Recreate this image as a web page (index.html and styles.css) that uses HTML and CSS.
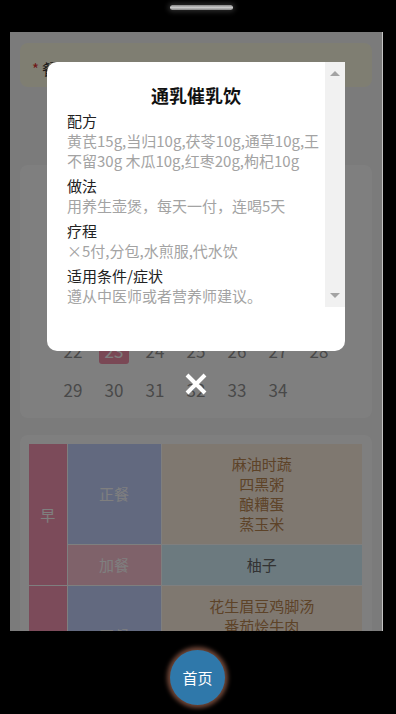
FILE: index.html
```html
<!DOCTYPE html>
<html lang="zh-CN">
<head>
<meta charset="utf-8">
<title>通乳催乳饮</title>
<link rel="stylesheet" href="styles.css">
</head>
<body>
<div class="device">
  <div class="top-bar"><span class="speaker"></span></div>
  <div class="screen">
    <div class="page">
      <div class="card notice"><span class="req">*</span>餐单根据产后天数推荐，仅供参考</div>
      <div class="card calendar">
        <div class="cal-grid">
          <span class="head">日</span><span class="head">一</span><span class="head">二</span><span class="head">三</span><span class="head">四</span><span class="head">五</span><span class="head">六</span>
          <span>1</span><span>2</span><span>3</span><span>4</span><span>5</span><span>6</span><span>7</span>
          <span>8</span><span>9</span><span>10</span><span>11</span><span>12</span><span>13</span><span>14</span>
          <span>15</span><span>16</span><span>17</span><span>18</span><span>19</span><span>20</span><span>21</span>
          <span>22</span><span class="today"><b>23</b></span><span>24</span><span>25</span><span>26</span><span>27</span><span>28</span>
          <span>29</span><span>30</span><span>31</span><span>32</span><span>33</span><span>34</span>
        </div>
      </div>
      <div class="card menu">
        <table class="meal">
          <colgroup><col class="c1"><col class="c2"><col></colgroup>
          <tr><td class="time" rowspan="2">早</td><td class="kind main">正餐</td><td class="food">麻油时蔬<br>四黑粥<br>酿糟蛋<br>蒸玉米</td></tr>
          <tr><td class="kind extra">加餐</td><td class="fruit">柚子</td></tr>
          <tr><td class="time" rowspan="2">午</td><td class="kind main">正餐</td><td class="food">花生眉豆鸡脚汤<br>番茄烩牛肉<br>清炒菜心<br>米饭</td></tr>
          <tr><td class="kind extra">加餐</td><td class="fruit">苹果</td></tr>
        </table>
      </div>
    </div>
    <div class="overlay">
      <div class="modal">
        <div class="modal-scroll">
          <div class="modal-body">
            <h2 class="title">通乳催乳饮</h2>
            <dl class="info">
              <dt>配方</dt>
              <dd>黄芪15g,当归10g,茯苓10g,通草10g,王不留30g 木瓜10g,红枣20g,枸杞10g</dd>
              <dt>做法</dt>
              <dd>用养生壶煲，每天一付，连喝5天</dd>
              <dt>疗程</dt>
              <dd>×5付,分包,水煎服,代水饮</dd>
              <dt>适用条件/症状</dt>
              <dd>遵从中医师或者营养师建议。</dd>
            </dl>
          </div>
          <div class="scrollbar"><span class="arrow up"></span><span class="arrow down"></span></div>
        </div>
      </div>
      <button class="close" aria-label="关闭"><svg width="22" height="22" viewBox="0 0 22 22"><path d="M2 2L20 20M20 2L2 20" stroke="#fff" stroke-width="4" fill="none"/></svg></button>
    </div>
  </div>
  <div class="bottom-bar"><button class="home">首页</button></div>
</div>
</body>
</html>
```

FILE: styles.css
```css
* { box-sizing: border-box; }
html, body { margin: 0; padding: 0; }
body {
  width: 396px;
  height: 714px;
  background: #000;
  overflow: hidden;
  font-family: "Noto Sans CJK SC", "Microsoft YaHei", sans-serif;
}
.device { display: flex; flex-direction: column; height: 714px; }

.top-bar { height: 32px; flex: none; padding: 5px 0 0 170px; }
.speaker {
  display: block;
  width: 63px;
  height: 5px;
  border-radius: 3px;
  background: linear-gradient(#858585, #c8c8c8 50%, #858585);
  box-shadow: 0 0 5px 2px rgba(255, 255, 255, .16);
}

.screen {
  position: relative;
  flex: none;
  margin-left: 10px;
  width: 373px;
  height: 599px;
  background: #f6f6f6;
  border-right: 1px solid #c4c4c4;
  overflow: hidden;
}
.page { padding: 11px 10px 0 10px; }
.card { background: #fff; border-radius: 8px; }

.notice {
  height: 44px;
  background: #fffde4;
  display: flex;
  align-items: center;
  padding: 8px 12px 0;
  font-size: 15px;
  line-height: 20px;
  color: #333;
  white-space: nowrap;
  overflow: hidden;
}
.req { color: #e0302f; margin-right: 3px; }

.calendar { margin-top: 78px; padding: 10px 0 9px; }
.cal-grid {
  width: 287px;
  margin: 0 auto;
  display: grid;
  grid-template-columns: repeat(7, 41px);
  grid-auto-rows: 39px;
}
.cal-grid span {
  display: flex;
  align-items: center;
  justify-content: center;
  font-size: 17px;
  color: #939393;
}
.cal-grid .head { color: #666; font-size: 15px; }
.cal-grid .today b {
  display: flex;
  align-items: center;
  justify-content: center;
  width: 30px;
  height: 26px;
  border-radius: 3px;
  background: #f591ab;
  color: #fff;
  font-weight: normal;
}

.menu { margin-top: 17px; padding: 9px 10px 9px 9px; }
.meal {
  width: 100%;
  border-collapse: collapse;
  border-style: hidden;
  table-layout: fixed;
  font-size: 15px;
  line-height: 20px;
  text-align: center;
}
.meal .c1 { width: 38px; }
.meal .c2 { width: 94px; }
.meal td { border: 1px solid #fff; padding: 10px 0; vertical-align: middle; }
.meal .time { background: #f896b4; color: #fff; }
.meal .main { background: #c4d2ff; color: #fff; }
.meal .extra { background: #ffc4d4; color: #fff; }
.meal .food { background: #fff0e0; color: #bb8650; }
.meal .fruit { background: #d8f4ff; color: #666; }

.overlay {
  position: absolute;
  inset: 0;
  background: rgba(0, 0, 0, .5);
  display: flex;
  flex-direction: column;
  align-items: center;
  padding-top: 30px;
}
.modal {
  width: 298px;
  height: 289px;
  background: #fff;
  border-radius: 10px;
}
.modal-scroll { display: flex; height: 245px; }
.modal-body {
  flex: 1;
  min-width: 0;
  padding: 21px 0 0 20px;
  overflow: hidden;
}
.title {
  margin: 0 0 4px;
  font-size: 18px;
  line-height: 24px;
  font-weight: bold;
  color: #111;
  text-align: center;
}
.info { margin: 0; font-size: 15px; line-height: 20px; }
.info dt { color: #222; }
.info dd { margin: 0 0 5px; color: #a3a3a3; }
.scrollbar {
  flex: none;
  width: 20px;
  background: #f1f1f1;
  display: flex;
  flex-direction: column;
  justify-content: space-between;
  align-items: center;
  padding: 9px 0;
}
.arrow { width: 0; height: 0; border-left: 5px solid transparent; border-right: 5px solid transparent; }
.arrow.up { border-bottom: 5px solid #a3a3a3; }
.arrow.down { border-top: 5px solid #a3a3a3; }

.close {
  margin-top: 22px;
  width: 22px;
  height: 22px;
  padding: 0;
  border: 0;
  background: none;
  display: block;
}
.close svg { display: block; }

.bottom-bar { flex: 1; padding: 19px 0 0 170px; }
.home {
  width: 55px;
  height: 55px;
  border-radius: 50%;
  border: 0;
  padding: 0;
  background: #2f78aa;
  color: #fff;
  font-family: inherit;
  font-size: 15px;
  box-shadow: 0 0 4px 3px rgba(150, 95, 75, .75);
}
```
